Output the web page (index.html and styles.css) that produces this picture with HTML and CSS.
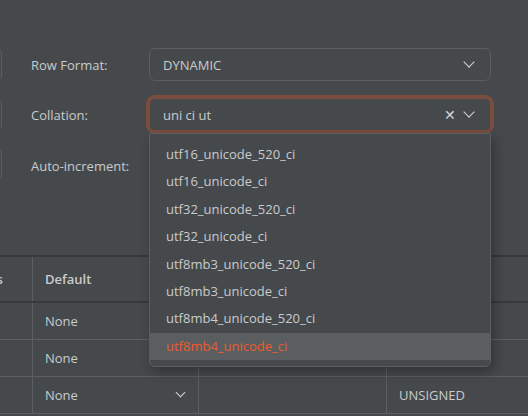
FILE: index.html
```html
<!DOCTYPE html>
<html lang="en">
<head>
    <meta charset="UTF-8">
    <meta name="viewport" content="width=device-width, initial-scale=1.0">
    <title>Table Options</title>
    <link rel="stylesheet" href="styles.css">
</head>
<body>
    <div class="options">
        <div class="stub"></div>
        <label class="opt-label">Row Format:</label>
        <div class="select">
            <span class="value">DYNAMIC</span>
            <span class="chevron"></span>
        </div>

        <div class="stub"></div>
        <label class="opt-label">Collation:</label>
        <div class="select focused">
            <span class="value">uni ci ut</span>
            <span class="clear">&#x2715;</span>
            <span class="chevron"></span>
            <ul class="menu">
                <li>utf16_unicode_520_ci</li>
                <li>utf16_unicode_ci</li>
                <li>utf32_unicode_520_ci</li>
                <li>utf32_unicode_ci</li>
                <li>utf8mb3_unicode_520_ci</li>
                <li>utf8mb3_unicode_ci</li>
                <li>utf8mb4_unicode_520_ci</li>
                <li class="active">utf8mb4_unicode_ci</li>
            </ul>
        </div>

        <div class="stub"></div>
        <label class="opt-label low">Auto-increment:</label>
        <div class="input"></div>
    </div>

    <table class="columns">
        <thead>
            <tr>
                <th class="c1">Length/Values</th>
                <th class="c2">Default</th>
                <th class="c3"></th>
                <th class="c4"></th>
            </tr>
        </thead>
        <tbody>
            <tr>
                <td></td>
                <td><div class="cell-select">None<span class="chevron"></span></div></td>
                <td></td>
                <td></td>
            </tr>
            <tr>
                <td></td>
                <td><div class="cell-select">None<span class="chevron"></span></div></td>
                <td></td>
                <td></td>
            </tr>
            <tr>
                <td></td>
                <td><div class="cell-select">None<span class="chevron"></span></div></td>
                <td></td>
                <td>UNSIGNED</td>
            </tr>
        </tbody>
    </table>
</body>
</html>
```

FILE: styles.css
```css
body {
    margin: 0;
    background-color: #45494c;
    color: #c9cbcd;
    font-family: "Open Sans", "Noto Sans", sans-serif;
    font-size: 13px;
    overflow: hidden;
}
.options {
    display: grid;
    grid-template-columns: 202px 147px 342px;
    grid-auto-rows: 33px;
    row-gap: 17px;
    margin-left: -200px;
    padding-top: 48px;
    align-items: center;
}
.stub {
    height: 33px;
    box-sizing: border-box;
    border: 1px solid #5b5f62;
    border-radius: 6px;
}
.opt-label {
    padding-left: 29px;
    white-space: nowrap;
}
.opt-label.low {
    padding-top: 3px;
}
.select, .input {
    position: relative;
    height: 33px;
    box-sizing: border-box;
    border: 1px solid #5b5f62;
    border-radius: 6px;
    display: flex;
    align-items: center;
    padding: 0 17px 0 13px;
}
.select .value {
    flex: 1;
}
.select.focused {
    border-color: #7a4d3e;
    box-shadow: 0 0 0 3px #7a4d3e;
}
.clear {
    font-size: 14px;
    color: #d4d6d8;
    margin-right: 9px;
}
.chevron {
    width: 7px;
    height: 7px;
    border-right: 1.5px solid #d4d6d8;
    border-bottom: 1.5px solid #d4d6d8;
    transform: rotate(45deg);
    margin-top: -5px;
}
.menu {
    position: absolute;
    top: calc(100% + 3px);
    left: -1px;
    right: -1px;
    margin: 0;
    padding: 7px 0 6px;
    list-style: none;
    background-color: #45494c;
    border: 1px solid #5b5f62;
    border-radius: 0 0 6px 6px;
    box-shadow: 3px 5px 12px rgba(0, 0, 0, 0.3);
    z-index: 10;
}
.menu li {
    height: 27.4px;
    line-height: 27.4px;
    padding-left: 16px;
}
.menu li.active {
    background-color: #5a5e61;
    color: #ef5a2a;
}
.columns {
    margin-top: 74px;
    margin-left: -99px;
    border-collapse: collapse;
    table-layout: fixed;
    width: 720px;
}
.columns th, .columns td {
    text-align: left;
    padding: 0 12px;
    border: 1px solid #5b5f62;
    height: 36px;
    font-weight: normal;
}
.columns th {
    font-weight: 600;
    height: 44px;
    border-top: 2px solid #37393c;
    border-bottom: 2px solid #37393c;
}
.columns th:first-child, .columns td:first-child {
    border-left: none;
}
.c1 { width: 107px; }
.c2 { width: 141px; }
.c3 { width: 163px; }
.c4 { width: 280px; }
.cell-select {
    display: flex;
    align-items: center;
    justify-content: space-between;
    padding-right: 2px;
}
.cell-select .chevron {
    width: 6px;
    height: 6px;
}
```
